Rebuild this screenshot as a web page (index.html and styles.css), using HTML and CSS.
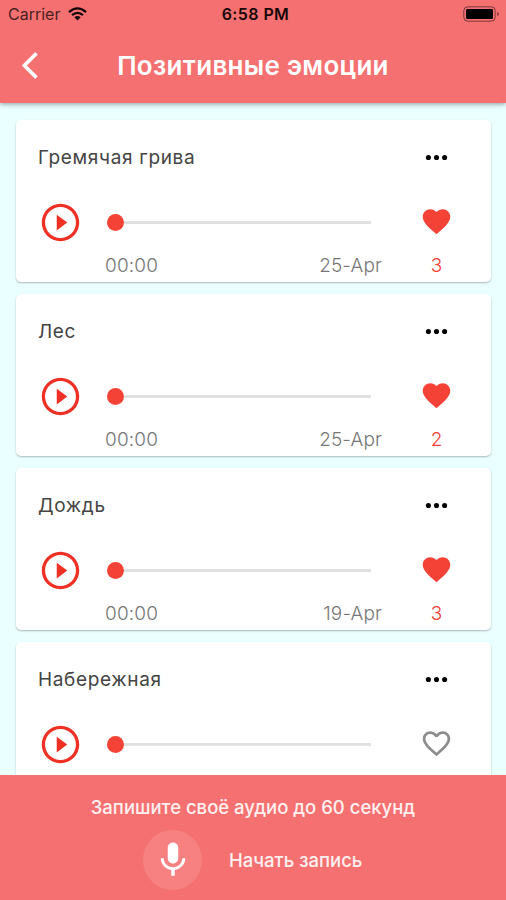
FILE: index.html
```html
<!DOCTYPE html>
<html lang="ru">
<head>
<meta charset="utf-8">
<title>Позитивные эмоции</title>
<link rel="stylesheet" href="styles.css">
</head>
<body>
<svg class="defs" aria-hidden="true">
  <symbol id="play" viewBox="0 0 24 24"><path d="M10 16.200l5.600-4.200-5.600-4.200v8.400zM12 2C6.480 2 2 6.480 2 12s4.480 10 10 10 10-4.480 10-10S17.520 2 12 2zm0 18.250c-4.550 0-8.250-3.700-8.250-8.250S7.450 3.750 12 3.750s8.250 3.700 8.250 8.250-3.700 8.250-8.250 8.250z"/></symbol>
  <symbol id="more" viewBox="0 0 24 24"><circle cx="6.100" cy="12" r="1.850"/><circle cx="12" cy="12" r="1.850"/><circle cx="17.900" cy="12" r="1.850"/></symbol>
  <symbol id="heart" viewBox="0 0 24 24"><path d="M12 21.350l-1.450-1.320C5.400 15.360 2 12.280 2 8.500 2 5.420 4.420 3 7.500 3c1.740 0 3.410.810 4.500 2.090C13.090 3.810 14.760 3 16.500 3 19.580 3 22 5.420 22 8.500c0 3.780-3.400 6.860-8.550 11.540L12 21.350z"/></symbol>
  <symbol id="heart-outline" viewBox="0 0 24 24"><path d="M16.500 3c-1.740 0-3.410.810-4.500 2.090C10.910 3.810 9.240 3 7.500 3 4.420 3 2 5.420 2 8.500c0 3.780 3.400 6.860 8.550 11.540L12 21.350l1.450-1.320C18.600 15.360 22 12.280 22 8.500 22 5.420 19.580 3 16.500 3zm-4.400 15.550l-.1.100-.1-.1C7.140 14.240 4 11.390 4 8.500 4 6.500 5.500 5 7.500 5c1.540 0 3.040.990 3.570 2.360h1.870C13.460 5.990 14.960 5 16.500 5c2 0 3.500 1.500 3.500 3.500 0 2.890-3.140 5.740-7.900 10.050z"/></symbol>
</svg>
<div class="screen">
  <header class="top">
    <div class="status">
      <div class="carrier">Carrier
        <svg class="wifi" viewBox="0 0 19 14"><g fill="none" stroke="currentColor" stroke-width="2.300"><path d="M1 5.100Q9.500-2.400 18 5.100"/><path d="M4 8.200Q9.500 3.600 15 8.200"/></g><path d="M6.300 10.200Q9.500 7.700 12.700 10.200L9.500 13.500z"/></svg>
      </div>
      <div class="clock">6:58 PM</div>
      <svg class="battery" viewBox="0 0 37 16"><rect x=".8" y=".8" width="31.400" height="14.400" rx="4" fill="none" stroke="currentColor" stroke-opacity=".5"/><rect x="3" y="3" width="27" height="10" rx="1.200"/><path d="M34.300 6v4q1.500-.5 1.500-2t-1.500-2z" opacity=".6"/></svg>
    </div>
    <div class="nav">
      <svg class="back" viewBox="0 2 12 20"><path d="M11.670 3.870L9.900 2.100 0 12l9.900 9.900 1.770-1.770L3.540 12z" stroke="currentColor" stroke-width=".3"/></svg>
      <h1>Позитивные эмоции</h1>
    </div>
  </header>
  <main class="list">
    <article class="card">
      <h2>Гремячая грива</h2><svg class="more"><use href="#more"/></svg>
      <svg class="play"><use href="#play"/></svg><div class="slider"><span class="thumb"></span><span class="track"></span></div><svg class="heart"><use href="#heart"/></svg>
      <div class="meta"><span class="time">00:00</span><span class="date">25-Apr</span></div><span class="likes">3</span>
    </article>
    <article class="card">
      <h2>Лес</h2><svg class="more"><use href="#more"/></svg>
      <svg class="play"><use href="#play"/></svg><div class="slider"><span class="thumb"></span><span class="track"></span></div><svg class="heart"><use href="#heart"/></svg>
      <div class="meta"><span class="time">00:00</span><span class="date">25-Apr</span></div><span class="likes">2</span>
    </article>
    <article class="card">
      <h2>Дождь</h2><svg class="more"><use href="#more"/></svg>
      <svg class="play"><use href="#play"/></svg><div class="slider"><span class="thumb"></span><span class="track"></span></div><svg class="heart"><use href="#heart"/></svg>
      <div class="meta"><span class="time">00:00</span><span class="date">19-Apr</span></div><span class="likes">3</span>
    </article>
    <article class="card">
      <h2>Набережная</h2><svg class="more"><use href="#more"/></svg>
      <svg class="play"><use href="#play"/></svg><div class="slider"><span class="thumb"></span><span class="track"></span></div><svg class="heart off"><use href="#heart-outline"/></svg>
    </article>
  </main>
  <footer class="record">
    <p class="hint">Запишите своё аудио до 60 секунд</p>
    <div class="action">
      <span class="mic"><svg viewBox="0 0 24 24"><path d="M12 14c1.660 0 3-1.340 3-3V5c0-1.660-1.340-3-3-3S9 3.340 9 5v6c0 1.660 1.340 3 3 3zM17.300 11c0 3-2.540 5.100-5.300 5.100S6.700 14 6.700 11H5c0 3.410 2.720 6.230 6 6.720V21h2v-3.280c3.280-.480 6-3.300 6-6.720h-1.700z"/></svg></span>
      <span class="start">Начать запись</span>
    </div>
  </footer>
</div>
</body>
</html>
```
FILE: styles.css
```css
* { box-sizing: border-box; }
body { margin: 0; font-family: Inter, "Liberation Sans", sans-serif; }
h1, h2, p { margin: 0; }
svg { display: block; fill: currentColor; }
.defs { display: none; }
.screen { display: flex; flex-direction: column; height: 900px; overflow: hidden; background: #eaffff; }

.top { flex: none; height: 103px; background: #f57171; box-shadow: 0 1px 5px rgba(0, 0, 0, .4); z-index: 1; }
.status { display: grid; grid-template-columns: 1fr auto 1fr; align-items: center; height: 28px; padding: 0 6px 0 8px; color: #180708; }
.carrier { display: flex; align-items: center; gap: 8px; font-size: 16px; color: #4b2022; }
.wifi { width: 19px; height: 14px; color: #180708; }
.clock { padding-left: 3px; font-size: 16px; font-weight: 600; letter-spacing: .4px; }
.battery { width: 37px; height: 16px; justify-self: end; color: #000; }
.nav { display: grid; grid-template-columns: 60px 1fr 60px; align-items: center; height: 75px; padding-bottom: 1px; color: #fff; }
.back { width: 16px; height: 27px; margin-left: 22px; }
h1 { font-size: 26px; font-weight: 600; text-align: center; letter-spacing: .3px; white-space: nowrap; }

.list { flex: 1; min-height: 0; overflow: hidden; padding: 17px 15px 0 16px; }
.card { display: grid; grid-template-columns: 89px 277px 109px; grid-template-rows: 74px 56px 32px; align-items: center; height: 162px; margin-bottom: 12px; background: #fff; border-radius: 5px; box-shadow: 0 1px 2px rgba(0, 0, 0, .28); }
h2 { grid-column: 1 / 3; padding-left: 22px; font-size: 19px; font-weight: 400; letter-spacing: .65px; color: #444; }
.more, .heart { width: 33px; height: 33px; justify-self: center; }
.more { color: #000; }
.play { width: 45px; height: 45px; margin-top: 1px; justify-self: center; color: #ee3124; }
.heart { margin-bottom: 2px; color: #f44336; }
.heart.off { color: #8d8d8d; }
.slider { display: flex; align-items: center; padding: 0 11px 0 2px; }
.thumb { width: 17px; height: 17px; border-radius: 50%; background: #f44336; }
.track { flex: 1; height: 3px; background: #e1e1e1; }
.meta { grid-column: 2; display: flex; justify-content: space-between; padding-bottom: 2px; font-size: 19px; font-weight: 300; color: #777; letter-spacing: .15px; }
.likes { justify-self: center; padding-bottom: 2px; font-size: 19px; font-weight: 300; color: #f44336; }

.record { flex: none; height: 125px; padding-top: 17px; background: #f57171; color: #fff0f0; z-index: 1; }
.hint { text-align: center; font-size: 18.5px; font-weight: 500; line-height: 30px; }
.action { display: flex; align-items: center; gap: 27px; margin: 8px 0 0 143px; }
.mic { display: grid; place-items: center; width: 59px; height: 60px; border-radius: 50%; background: #f78080; color: #fff; }
.mic svg { width: 42px; height: 42px; }
.start { font-size: 18.5px; font-weight: 500; }
```
